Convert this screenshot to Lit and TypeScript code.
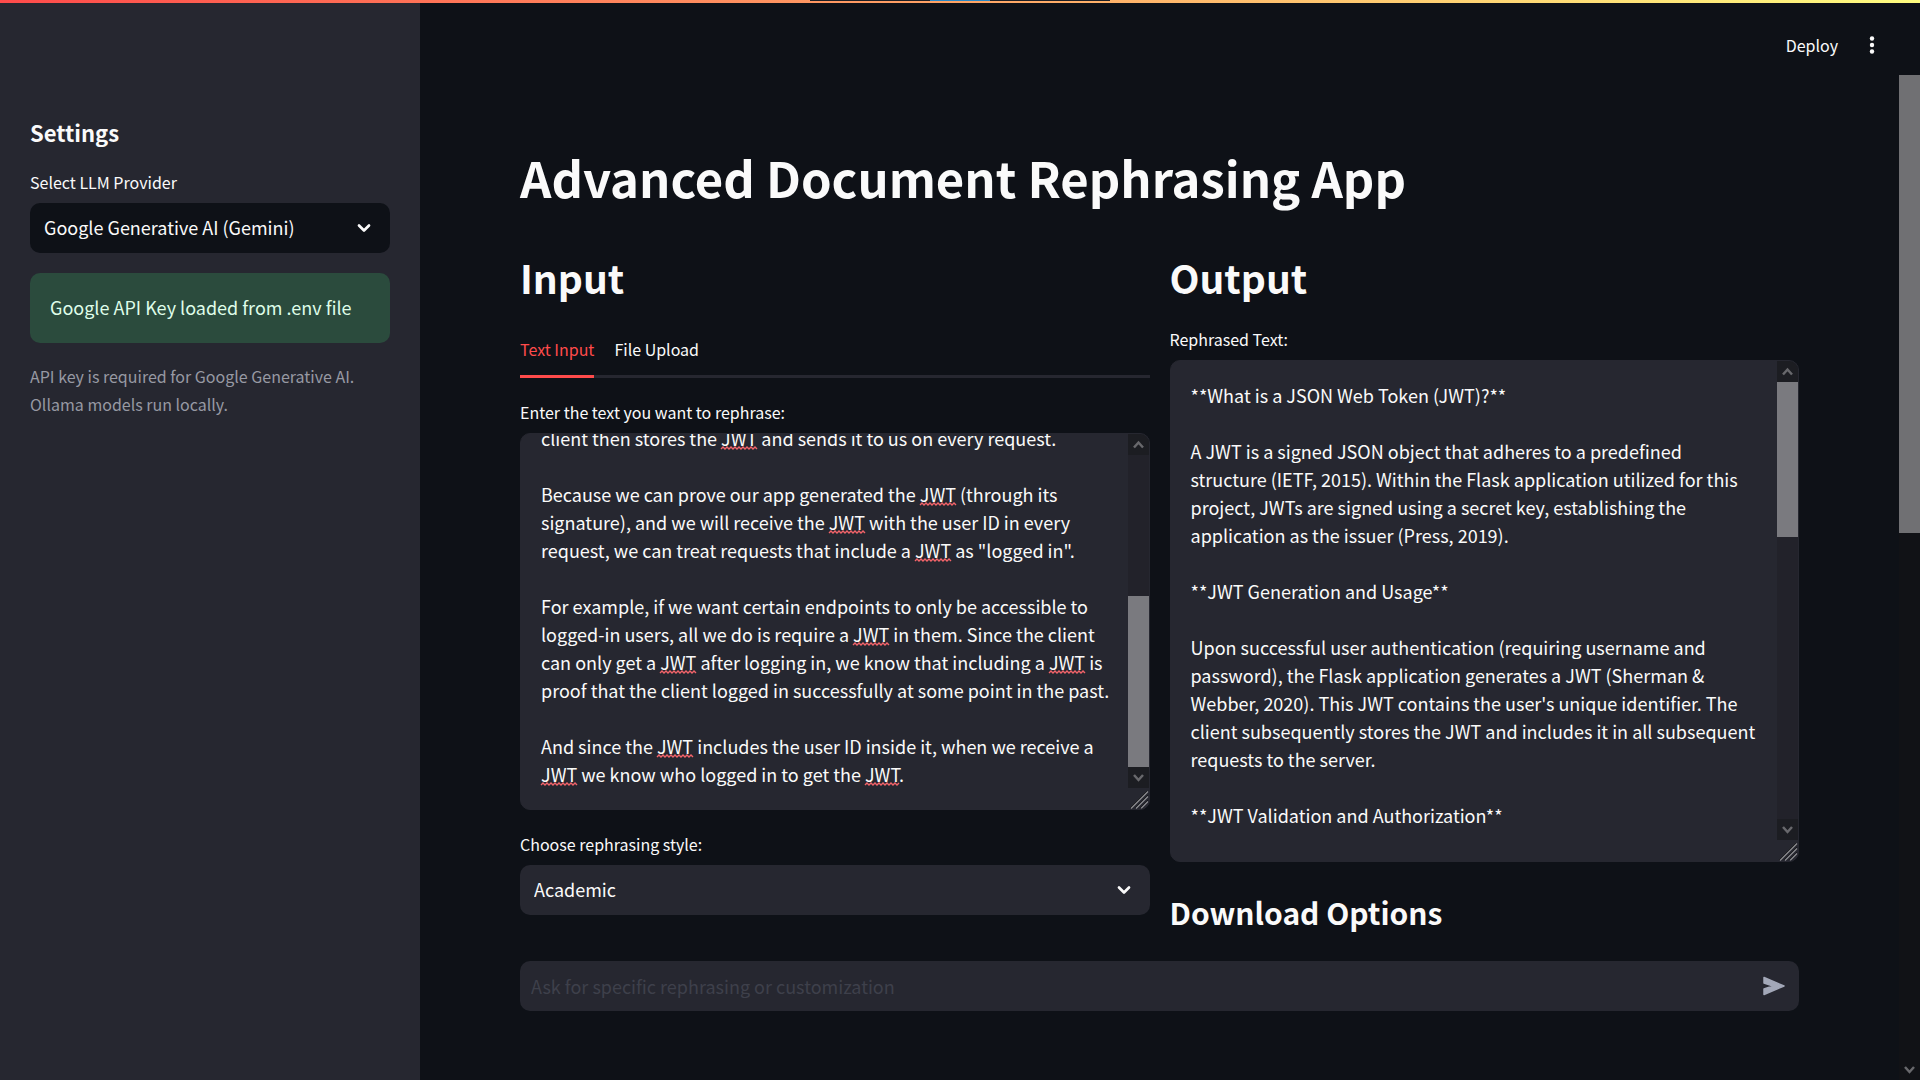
import { LitElement, html, svg, css, nothing } from "lit";
import { customElement, property, state, query } from "lit/decorators.js";

const SOURCE_TEXT = `JSON Web Tokens are pieces of signed JSON that only our own app is able to generate.

When a user logs in by sending us their username and password, we check them against our database.

If they are correct, our Flask app creates a JWT which contains the ID of that user inside it.

That token is then signed with a secret key and it is returned. The
client then stores the JWT and sends it to us on every request.

Because we can prove our app generated the JWT (through its signature), and we will receive the JWT with the user ID in every request, we can treat requests that include a JWT as "logged in".

For example, if we want certain endpoints to only be accessible to logged-in users, all we do is require a JWT in them. Since the client can only get a JWT after logging in, we know that including a JWT is proof that the client logged in successfully at some point in the past.

And since the JWT includes the user ID inside it, when we receive a JWT we know who logged in to get the JWT.`;

const OUTPUT_TEXT = `**What is a JSON Web Token (JWT)?**

A JWT is a signed JSON object that adheres to a predefined structure (IETF, 2015). Within the Flask application utilized for this project, JWTs are signed using a secret key, establishing the application as the issuer (Press, 2019).

**JWT Generation and Usage**

Upon successful user authentication (requiring username and password), the Flask application generates a JWT (Sherman & Webber, 2020). This JWT contains the user's unique identifier. The client subsequently stores the JWT and includes it in all subsequent requests to the server.

**JWT Validation and Authorization**

The server validates the signature of each JWT that it receives. Because only the application holds the secret key, a valid signature demonstrates that the token was issued by the application itself.

Requests that include a valid JWT are therefore treated as originating from an authenticated user.

**Protected Endpoints**

Certain endpoints may be restricted to authenticated users. In these cases, the presence of a JWT is required in the request.

Since a client can obtain a JWT only after a successful login, its inclusion serves as evidence of prior authentication.

**User Identification**

The JWT contains the unique identifier of the user. Upon receipt of the token, the application is able to determine which user authenticated in order to obtain it.

**Summary**

JWTs allow stateless authentication of clients.

**References**

IETF. (2015). JSON Web Token (JWT).

Press. (2019). Signing tokens in Flask applications.

Sherman & Webber. (2020). Token based authentication.`;

const FONT = css`"Noto Sans CJK SC", "Noto Sans CJK JP", "Open Sans", sans-serif`;

const reset = css`
  *,
  *::before,
  *::after {
    box-sizing: border-box;
  }
  button,
  select,
  input,
  textarea {
    font: inherit;
    color: inherit;
    background: none;
    border: 0;
    margin: 0;
    padding: 0;
    outline: none;
  }
  svg {
    display: block;
  }
`;

const fieldLabel = css`
  label {
    display: block;
    font-size: 16px;
    line-height: 28px;
    padding-bottom: 7px;
  }
`;

@customElement("scroll-rail")
export class ScrollRail extends LitElement {
  /** Thumb start and length, as percentages of the track. */
  @property({ type: Number }) start = 0;
  @property({ type: Number }) length = 50;
  /** Leaves out the upper arrow. */
  @property({ type: Boolean }) open = false;

  static styles = [
    reset,
    css`
      :host {
        display: flex;
        flex-direction: column;
        width: 21px;
        background: var(--rail-track, #22222a);
      }
      .end {
        flex: none;
        height: 21px;
        display: grid;
        place-items: center;
        background: var(--rail-end, #1c1d22);
        color: #68686c;
      }
      .track {
        flex: 1;
        min-height: 0;
        display: flex;
        flex-direction: column;
      }
      .thumb {
        flex: none;
        background: var(--rail-thumb, #7a7a7f);
      }
    `,
  ];

  render() {
    return html`
      ${this.open
        ? nothing
        : html`<div class="end">
            <svg width="11" height="9" viewBox="0 0 11 9"><path d="M1 7.500 5.500 2.500l4.500 5" fill="none" stroke="currentColor" stroke-width="2.500"/></svg>
          </div>`}
      <div class="track">
        <div style="height:${this.start}%"></div>
        <div class="thumb" style="height:${this.length}%"></div>
      </div>
      <div class="end">
        <svg width="11" height="9" viewBox="0 0 11 9"><path d="M1 2l4.500 5L10 2" fill="none" stroke="currentColor" stroke-width="2.500"/></svg>
      </div>
    `;
  }
}

interface Mark {
  x: number;
  y: number;
  w: number;
}

@customElement("text-area-field")
export class TextAreaField extends LitElement {
  @property() label = "";
  @property() value = "";
  @property({ type: Number }) height = 376;
  @property() flagged = "";
  @property({ type: Boolean }) atEnd = false;

  @state() private marks: Mark[] = [];
  @state() private thumbStart = 0;
  @state() private thumbLength = 100;
  @state() private scrolled = 0;

  @query("textarea") private area!: HTMLTextAreaElement;
  @query(".frame") private frame!: HTMLElement;

  static styles = [
    reset,
    fieldLabel,
    css`
      :host {
        display: block;
      }
      .box {
        display: grid;
        grid-template-columns: minmax(0, 1fr) auto;
        border: 1px solid #262730;
        border-radius: 10px;
        background: #262730;
        overflow: hidden;
      }
      .frame {
        position: relative;
        overflow: hidden;
        display: grid;
      }
      textarea,
      .mirror {
        display: block;
        width: 100%;
        padding: 20px 16px 21px 20px;
        font-size: 18px;
        line-height: 28px;
        white-space: pre-wrap;
        overflow-wrap: break-word;
      }
      textarea {
        height: 100%;
        resize: none;
        overflow-y: scroll;
        scrollbar-width: none;
      }
      .mirror {
        position: absolute;
        visibility: hidden;
      }
      .marks {
        position: absolute;
        left: 0;
        top: 0;
        width: 100%;
        height: 100%;
        pointer-events: none;
      }
      .side {
        display: flex;
        flex-direction: column;
      }
      scroll-rail {
        flex: 1;
        min-height: 0;
      }
      .grip {
        flex: none;
        color: #8c8c90;
      }
    `,
  ];

  async firstUpdated() {
    await document.fonts.ready;
    if (this.flagged) this.findMarks();
    if (this.atEnd) this.area.scrollTop = this.area.scrollHeight;
    this.sync();
  }

  private sync = () => {
    const a = this.area;
    this.thumbLength = (a.clientHeight / a.scrollHeight) * 100;
    this.thumbStart = (a.scrollTop / a.scrollHeight) * 100;
    this.scrolled = a.scrollTop;
  };

  /** Lays the text out once in a hidden copy to find where the flagged words stand. */
  private findMarks() {
    const mirror = document.createElement("div");
    mirror.className = "mirror";
    mirror.textContent = this.value;
    this.frame.append(mirror);
    const origin = mirror.getBoundingClientRect();
    const node = mirror.firstChild as Text;
    const found: Mark[] = [];
    let at = this.value.indexOf(this.flagged);
    while (at >= 0) {
      const range = document.createRange();
      range.setStart(node, at);
      range.setEnd(node, at + this.flagged.length);
      const r = range.getBoundingClientRect();
      found.push({
        x: Math.round(r.left - origin.left),
        y: Math.round((r.top + r.bottom) / 2 - origin.top) + 9,
        w: Math.round(r.width),
      });
      at = this.value.indexOf(this.flagged, at + 1);
    }
    mirror.remove();
    this.marks = found;
  }

  private wave(m: Mark) {
    let d = `M${m.x} ${m.y + 2}`;
    for (let i = 0; i + 2 <= m.w; i += 2) d += `l2 ${(i / 2) % 2 ? 2 : -2}`;
    return svg`<path d=${d} fill="none" stroke="#f4646a" stroke-width="1.400"/>`;
  }

  render() {
    return html`
      <label for="area">${this.label}</label>
      <div class="box" style="height:${this.height}px">
        <div class="frame">
          <textarea id="area" spellcheck="false" .value=${this.value} @scroll=${this.sync}></textarea>
          ${this.marks.length
            ? html`<svg class="marks" aria-hidden="true"><g transform="translate(0 ${-this.scrolled})">${this.marks.map((m) => this.wave(m))}</g></svg>`
            : nothing}
        </div>
        <div class="side">
          <scroll-rail .start=${this.thumbStart} .length=${this.thumbLength}></scroll-rail>
          <svg class="grip" width="21" height="21" viewBox="0 0 21 21" fill="none"><path d="M2 20 19 3M7 20 20 7M12 20l8-8" stroke="#15161a"/><path d="M3 20.500 20 3.500M8 20.500l12-12M13 20.500l7-7" stroke="currentColor" stroke-width="1.200"/></svg>
        </div>
      </div>
    `;
  }
}

@customElement("select-field")
export class SelectField extends LitElement {
  @property() label = "";
  @property({ attribute: false }) options: string[] = [];

  static styles = [
    reset,
    fieldLabel,
    css`
      :host {
        display: block;
      }
      .control {
        display: grid;
        align-items: center;
        border-radius: 10px;
        background: var(--field, #262730);
      }
      select,
      svg {
        grid-area: 1 / 1;
      }
      select {
        appearance: none;
        width: 100%;
        height: 50px;
        padding: 0 50px 2px 14px;
        font-size: 18px;
      }
      svg {
        justify-self: end;
        margin-right: 18px;
        pointer-events: none;
      }
    `,
  ];

  render() {
    return html`
      <label for="choice">${this.label}</label>
      <div class="control">
        <select id="choice">
          ${this.options.map((o) => html`<option>${o}</option>`)}
        </select>
        <svg width="16" height="10" viewBox="0 0 16 10" aria-hidden="true"><path d="M3 2.500l5 5 5-5" fill="none" stroke="currentColor" stroke-width="2.700" stroke-linecap="round" stroke-linejoin="round"/></svg>
      </div>
    `;
  }
}

@customElement("app-root")
export class AppRoot extends LitElement {
  @state() private tab = 0;

  static styles = [
    reset,
    css`
      :host {
        display: grid;
        grid-template-columns: 420px minmax(0, 1fr);
        grid-template-rows: 3px minmax(0, 1fr);
        height: 100vh;
        background: #0e1117;
        color: #fafafa;
        font-family: ${FONT};
        font-size: 18px;
      }
      .strip {
        grid-column: 1 / -1;
        background: linear-gradient(90deg, #ff4b4b, #fffd80);
      }
      .handle {
        height: 1px;
        width: 300px;
        margin: 0 auto;
        background: linear-gradient(90deg, #1d1f25 120px, #2a86c4 120px 180px, #1d1f25 180px);
      }
      .sidebar {
        background: #262730;
        padding: 113px 30px 0;
        display: flex;
        flex-direction: column;
        --field: #0e1117;
      }
      h1,
      h2,
      h3,
      p {
        margin: 0;
      }
      h1 {
        font-size: 49px;
        line-height: 66px;
        margin-bottom: 40px;
      }
      h2 {
        font-size: 39px;
        font-weight: 600;
        line-height: 54px;
        margin-bottom: 21px;
      }
      h3 {
        font-size: 30px;
        font-weight: 600;
        line-height: 42px;
        margin-top: 29px;
      }
      .settings {
        font-size: 22px;
        line-height: 32px;
        margin-bottom: 20px;
      }
      .notice {
        margin: 20px 0 19px;
        padding: 19px 20px 21px;
        border-radius: 10px;
        background: #2b4b3d;
        color: #dffde9;
        line-height: 30px;
      }
      .caption {
        font-size: 16px;
        line-height: 28px;
        color: #9799a3;
      }
      .main {
        display: grid;
        grid-template-columns: minmax(0, 1fr) auto;
        grid-template-rows: auto minmax(0, 1fr);
      }
      header {
        grid-column: 1 / -1;
        height: 72px;
        padding: 11px 38px 0 0;
        display: flex;
        align-items: center;
        justify-content: flex-end;
        gap: 24px;
      }
      .deploy {
        font-size: 16px;
        line-height: 28px;
      }
      .menu {
        width: 20px;
        height: 28px;
        display: grid;
        place-items: center;
      }
      .page {
        display: flex;
        flex-direction: column;
        min-width: 0;
        min-height: 0;
      }
      .content {
        flex: 1;
        min-height: 0;
        overflow: hidden;
        padding: 69px 100px 0;
      }
      .columns {
        display: grid;
        grid-template-columns: repeat(2, minmax(0, 1fr));
        gap: 20px;
      }
      .tabs {
        display: flex;
        gap: 20px;
        height: 53px;
        margin-bottom: 20px;
        box-shadow: inset 0 -3px #262730;
      }
      .tab {
        font-size: 16px;
        padding-bottom: 5px;
      }
      .tab.active {
        color: #ff4b4b;
        box-shadow: inset 0 -3px #ff4b4b;
      }
      .style {
        margin-top: 20px;
      }
      .ask {
        padding: 20px 100px 69px;
      }
      .ask-box {
        display: flex;
        align-items: center;
        height: 50px;
        padding: 0 14px 0 11px;
        border-radius: 10px;
        background: #262730;
      }
      .ask-box input {
        flex: 1;
        min-width: 0;
        height: 100%;
        font-size: 18px;
      }
      .ask-box input::placeholder {
        color: #3e404b;
        opacity: 1;
      }
      .send {
        color: #a3a8b8;
      }
      .page-rail {
        --rail-track: #111216;
        --rail-end: #111216;
        --rail-thumb: #707073;
      }
    `,
  ];

  render() {
    return html`
      <div class="strip"><div class="handle"></div></div>
      <aside class="sidebar">
        <h2 class="settings">Settings</h2>
        <select-field
          label="Select LLM Provider"
          .options=${["Google Generative AI (Gemini)", "Ollama"]}
        ></select-field>
        <div class="notice" role="status">Google API Key loaded from .env file</div>
        <p class="caption">API key is required for Google Generative AI. Ollama models run locally.</p>
      </aside>
      <div class="main">
        <header>
          <button class="deploy">Deploy</button>
          <button class="menu" aria-label="Main menu">
            <svg width="6" height="18" viewBox="0 0 6 18" fill="currentColor"><circle cx="3" cy="2.500" r="2.200"/><circle cx="3" cy="9" r="2.200"/><circle cx="3" cy="15.500" r="2.200"/></svg>
          </button>
        </header>
        <div class="page">
          <main class="content">
            <h1>Advanced Document Rephrasing App</h1>
            <div class="columns">
              <section>
                <h2>Input</h2>
                <div class="tabs" role="tablist">
                  ${["Text Input", "File Upload"].map(
                    (name, i) => html`<button
                      role="tab"
                      aria-selected=${this.tab === i}
                      class=${this.tab === i ? "tab active" : "tab"}
                      @click=${() => (this.tab = i)}
                    >${name}</button>`,
                  )}
                </div>
                <text-area-field
                  label="Enter the text you want to rephrase:"
                  .value=${SOURCE_TEXT}
                  .height=${377}
                  .flagged=${"JWT"}
                  .atEnd=${true}
                ></text-area-field>
                <select-field
                  class="style"
                  label="Choose rephrasing style:"
                  .options=${["Academic", "Casual", "Formal"]}
                ></select-field>
              </section>
              <section>
                <h2>Output</h2>
                <text-area-field label="Rephrased Text:" .value=${OUTPUT_TEXT} .height=${502}></text-area-field>
                <h3>Download Options</h3>
              </section>
            </div>
          </main>
          <form class="ask" @submit=${(e: Event) => e.preventDefault()}>
            <div class="ask-box">
              <input aria-label="Ask for specific rephrasing or customization" placeholder="Ask for specific rephrasing or customization" />
              <button class="send" aria-label="Send">
                <svg width="22" height="20" viewBox="0 0 22 20" fill="currentColor"><path d="M1 1.500 21 10 1 18.500v-5.500l9-3-9-3Z" stroke="currentColor" stroke-width="1.500" stroke-linejoin="round"/></svg>
              </button>
            </div>
          </form>
        </div>
        <scroll-rail class="page-rail" .open=${true} .start=${0} .length=${46.5}></scroll-rail>
      </div>
    `;
  }
}
